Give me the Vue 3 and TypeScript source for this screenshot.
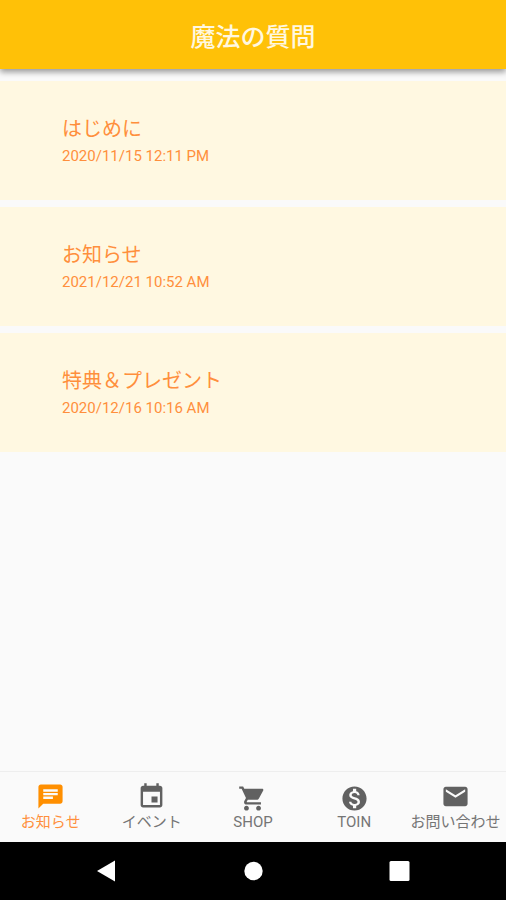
<script setup lang="ts">
import { ref } from 'vue'

interface Entry {
  title: string
  date: string
}

interface Tab {
  label: string
  latin: boolean
  icon: string
}

const entries: Entry[] = [
  { title: 'はじめに', date: '2020/11/15 12:11 PM' },
  { title: 'お知らせ', date: '2021/12/21 10:52 AM' },
  { title: '特典＆プレゼント', date: '2020/12/16 10:16 AM' },
]

const tabs: Tab[] = [
  {
    label: 'お知らせ',
    latin: false,
    icon: 'M20 2H4c-1.1 0-1.99.9-1.99 2L2 22l4-4h14c1.1 0 2-.9 2-2V4c0-1.1-.9-2-2-2zM6 9h12v2H6V9zm8 5H6v-2h8v2zm4-6H6V6h12v2z',
  },
  {
    label: 'イベント',
    latin: false,
    icon: 'M17 12h-5v5h5v-5zM16 1v2H8V1H6v2H5c-1.11 0-1.99.9-1.99 2L3 19c0 1.1.89 2 2 2h14c1.1 0 2-.9 2-2V5c0-1.1-.9-2-2-2h-1V1h-2zm3 18H5V8h14v11z',
  },
  {
    label: 'SHOP',
    latin: true,
    icon: 'M7 18c-1.1 0-1.99.9-1.99 2S5.9 22 7 22s2-.9 2-2-.9-2-2-2zM1 2v2h2l3.6 7.59-1.35 2.45c-.16.28-.25.61-.25.96 0 1.1.9 2 2 2h12v-2H7.42c-.14 0-.25-.11-.25-.25l.03-.12.9-1.63h7.45c.75 0 1.41-.41 1.75-1.03l3.58-6.49c.08-.14.12-.31.12-.48 0-.55-.45-1-1-1H5.21l-.94-2H1zm16 16c-1.1 0-1.99.9-1.99 2s.89 2 1.99 2 2-.9 2-2-.9-2-2-2z',
  },
  {
    label: 'TOIN',
    latin: true,
    icon: 'M12 2C6.48 2 2 6.48 2 12s4.48 10 10 10 10-4.48 10-10S17.52 2 12 2zm1.41 16.09V20h-2.67v-1.93c-1.71-.36-3.16-1.46-3.27-3.4h1.96c.1 1.05.82 1.87 2.65 1.87 1.96 0 2.4-.98 2.4-1.59 0-.83-.44-1.61-2.67-2.14-2.48-.6-4.18-1.62-4.18-3.67 0-1.72 1.39-2.84 3.11-3.21V4h2.67v1.95c1.86.45 2.79 1.86 2.85 3.39H14.3c-.05-1.11-.64-1.87-2.22-1.87-1.5 0-2.4.68-2.4 1.64 0 .84.65 1.39 2.67 1.91s4.18 1.39 4.18 3.91c-.01 1.83-1.38 2.83-3.12 3.16z',
  },
  {
    label: 'お問い合わせ',
    latin: false,
    icon: 'M20 4H4c-1.1 0-1.99.9-1.99 2L2 18c0 1.1.9 2 2 2h16c1.1 0 2-.9 2-2V6c0-1.1-.9-2-2-2zm0 4l-8 5-8-5V6l8 5 8-5v2z',
  },
]

const active = ref(0)
</script>

<template>
  <div class="screen">
    <header class="app-bar">
      <h1>魔法の質問</h1>
    </header>

    <main class="list">
      <a v-for="entry in entries" :key="entry.title" class="card" href="#">
        <span class="title">{{ entry.title }}</span>
        <span class="date">{{ entry.date }}</span>
      </a>
    </main>

    <nav class="tabs">
      <button
        v-for="(tab, i) in tabs"
        :key="tab.label"
        type="button"
        class="tab"
        :class="{ active: active === i }"
        @click="active = i"
      >
        <svg class="icon" viewBox="0 0 24 24" aria-hidden="true"><path :d="tab.icon" /></svg>
        <span class="label" :class="{ latin: tab.latin }">{{ tab.label }}</span>
      </button>
    </nav>

    <footer class="system-bar">
      <button type="button" aria-label="戻る">
        <svg viewBox="0 0 24 24" aria-hidden="true"><path d="M2 12 20 1.5v21z" /></svg>
      </button>
      <button type="button" aria-label="ホーム">
        <svg viewBox="0 0 24 24" aria-hidden="true"><circle cx="12.5" cy="12" r="9.2" /></svg>
      </button>
      <button type="button" aria-label="履歴">
        <svg viewBox="0 0 24 24" aria-hidden="true"><rect x="2.5" y="2" width="20" height="20" rx="1.5" /></svg>
      </button>
    </footer>
  </div>
</template>

<style>
body {
  margin: 0;
  background: #fafafa;
}
</style>

<style scoped>
.screen {
  display: flex;
  flex-direction: column;
  min-height: 100vh;
  background: #fafafa;
  font-family: Roboto, "Noto Sans CJK JP", sans-serif;
}

.app-bar {
  display: flex;
  align-items: center;
  justify-content: center;
  height: 69px;
  padding-top: 6px;
  box-sizing: border-box;
  background: #ffc107;
  box-shadow: 0 3px 6px rgba(0, 0, 0, 0.4);
}

h1 {
  margin: 0;
  font-size: 25px;
  line-height: 36px;
  font-weight: 500;
  color: #fff8e1;
}

.list {
  display: flex;
  flex: 1;
  flex-direction: column;
  gap: 7px;
  padding-top: 12px;
}

.card {
  display: flex;
  flex-direction: column;
  justify-content: center;
  height: 119px;
  padding: 0 62px;
  box-sizing: border-box;
  background: #fff8e1;
  color: #ff8f3c;
  text-decoration: none;
}

.title {
  font-size: 20px;
  line-height: 30px;
}

.date {
  font-size: 15px;
  line-height: 24px;
}

.tabs {
  display: grid;
  grid-template-columns: repeat(5, 1fr);
  height: 71px;
  box-sizing: border-box;
  border-top: 1px solid #eeeeee;
}

button {
  margin: 0;
  padding: 0;
  border: 0;
  background: none;
  font: inherit;
  cursor: pointer;
}

.tab {
  display: flex;
  flex-direction: column;
  align-items: center;
  justify-content: center;
  min-width: 0;
  color: #757575;
}

.tab.active {
  color: #ff8f3c;
}

.icon {
  width: 29px;
  height: 29px;
  fill: #616161;
}

.active .icon {
  fill: #ff8f00;
}

.label {
  font-size: 15px;
  line-height: 22px;
  white-space: nowrap;
}

.label.latin {
  line-height: 18px;
}

.system-bar {
  display: flex;
  align-items: center;
  justify-content: center;
  gap: 122px;
  height: 58px;
  background: #000;
}

.system-bar svg {
  display: block;
  width: 24px;
  height: 24px;
  fill: #fff;
}
</style>
